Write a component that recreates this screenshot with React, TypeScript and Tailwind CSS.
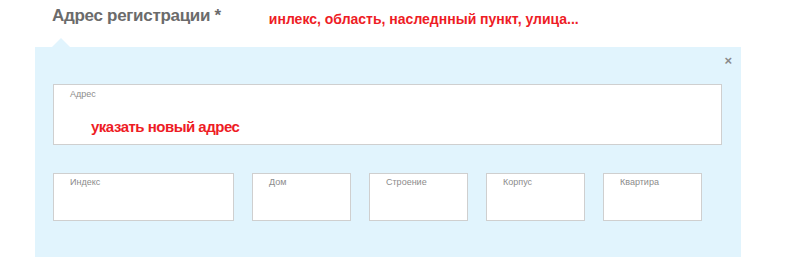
const FIELDS = [
  { label: "Индекс", width: "w-[181px]" },
  { label: "Дом", width: "w-[99px]" },
  { label: "Строение", width: "w-[99px]" },
  { label: "Корпус", width: "w-[99px]" },
  { label: "Квартира", width: "w-[99px]" },
];

export default function App() {
  return (
    <div className="w-[808px] h-[277px] bg-white font-['Liberation_Sans',Arial,sans-serif]">
      <div className="w-[706px] ml-[35px]">
        {/* Heading with red hint */}
        <div className="flex items-start pl-[17px] pt-[6px] h-[38px]">
          <h2 className="text-[17px] leading-[20px] font-bold text-[#6b6b6b] tracking-[-0.3px]">
            Адрес регистрации *
          </h2>
          <span className="ml-[48px] mt-[5px] text-[14px] leading-[16px] font-bold text-[#ee1c25]">
            инлекс, область, наследнный пункт, улица...
          </span>
        </div>

        {/* Pointer notch */}
        <div className="ml-[17px] w-0 h-0 border-l-[9px] border-r-[9px] border-b-[9px] border-l-transparent border-r-transparent border-b-[#e1f4fd]" />

        {/* Panel */}
        <div className="relative h-[210px] bg-[#e1f4fd] pt-[37px] pl-[18px] pr-[19px]">
          <button className="absolute top-[8px] right-[9px] text-[13px] leading-[12px] font-bold text-[#8a8a8a]">
            ×
          </button>

          <div className="h-[61px] bg-white border border-[#cfcfcf] pl-[16px] pt-[4px]">
            <div className="text-[9px] leading-[11px] text-[#8c8c8c]">Адрес</div>
            <div className="ml-[21px] mt-[18px] text-[15px] leading-[17px] font-bold tracking-[-0.5px] text-[#ee1c25]">
              указать новый адрес
            </div>
          </div>

          <div className="flex gap-[18px] mt-[28px]">
            {FIELDS.map((f) => (
              <div
                key={f.label}
                className={`${f.width} h-[48px] bg-white border border-[#cfcfcf] pl-[16px] pt-[3px]`}
              >
                <div className="text-[9px] leading-[11px] text-[#8c8c8c]">{f.label}</div>
              </div>
            ))}
          </div>
        </div>
      </div>
    </div>
  );
}
